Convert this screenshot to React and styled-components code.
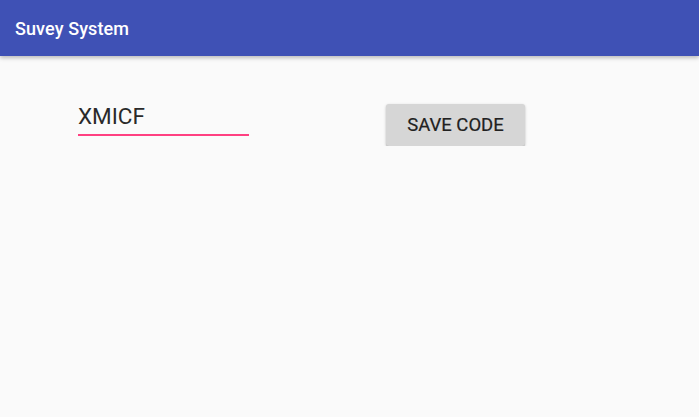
import React, { useState } from 'react'
import styled, { createGlobalStyle } from 'styled-components'

const Global = createGlobalStyle`
  html, body {
    margin: 0;
    padding: 0;
    background: #fafafa;
    font-family: Roboto, "Noto Sans", sans-serif;
  }
`

const AppBar = styled.header`
  height: 56px;
  background: #3f51b5;
  color: #fff;
  display: flex;
  align-items: center;
  padding: 0 15px;
  box-shadow: 0 2px 4px rgba(0, 0, 0, 0.25);
  position: relative;
`

const Title = styled.h1`
  margin: 0;
  font-size: 18px;
  font-weight: 500;
  letter-spacing: 0.1px;
`

const Content = styled.main`
  display: flex;
  align-items: flex-start;
  padding: 47px 0 0 78px;
`

const Field = styled.div`
  width: 171px;
  border-bottom: 2px solid #ff4081;
  margin-right: 137px;
`

const Input = styled.input`
  width: 100%;
  border: none;
  outline: none;
  background: transparent;
  font-family: Roboto, sans-serif;
  font-size: 22.5px;
  color: #2a2a2a;
  padding: 0 0 5px;
  height: 31px;
  box-sizing: border-box;
`

const Button = styled.button`
  margin-top: 1px;
  width: 139px;
  height: 42px;
  border: none;
  border-radius: 3px;
  background: #d6d6d6;
  color: #212121;
  font-family: Roboto, sans-serif;
  font-size: 18.5px;
  font-weight: 400;
  -webkit-text-stroke: 0.2px #212121;
  text-transform: uppercase;
  padding: 0;
  box-shadow: 0 1px 3px rgba(0, 0, 0, 0.22), 0 1px 1px rgba(0, 0, 0, 0.14);
`

export default function App() {
  const [code, setCode] = useState('XMICF')
  return (
    <>
      <Global />
      <AppBar>
        <Title>Suvey System</Title>
      </AppBar>
      <Content>
        <Field>
          <Input value={code} onChange={e => setCode(e.target.value)} />
        </Field>
        <Button>Save Code</Button>
      </Content>
    </>
  )
}
